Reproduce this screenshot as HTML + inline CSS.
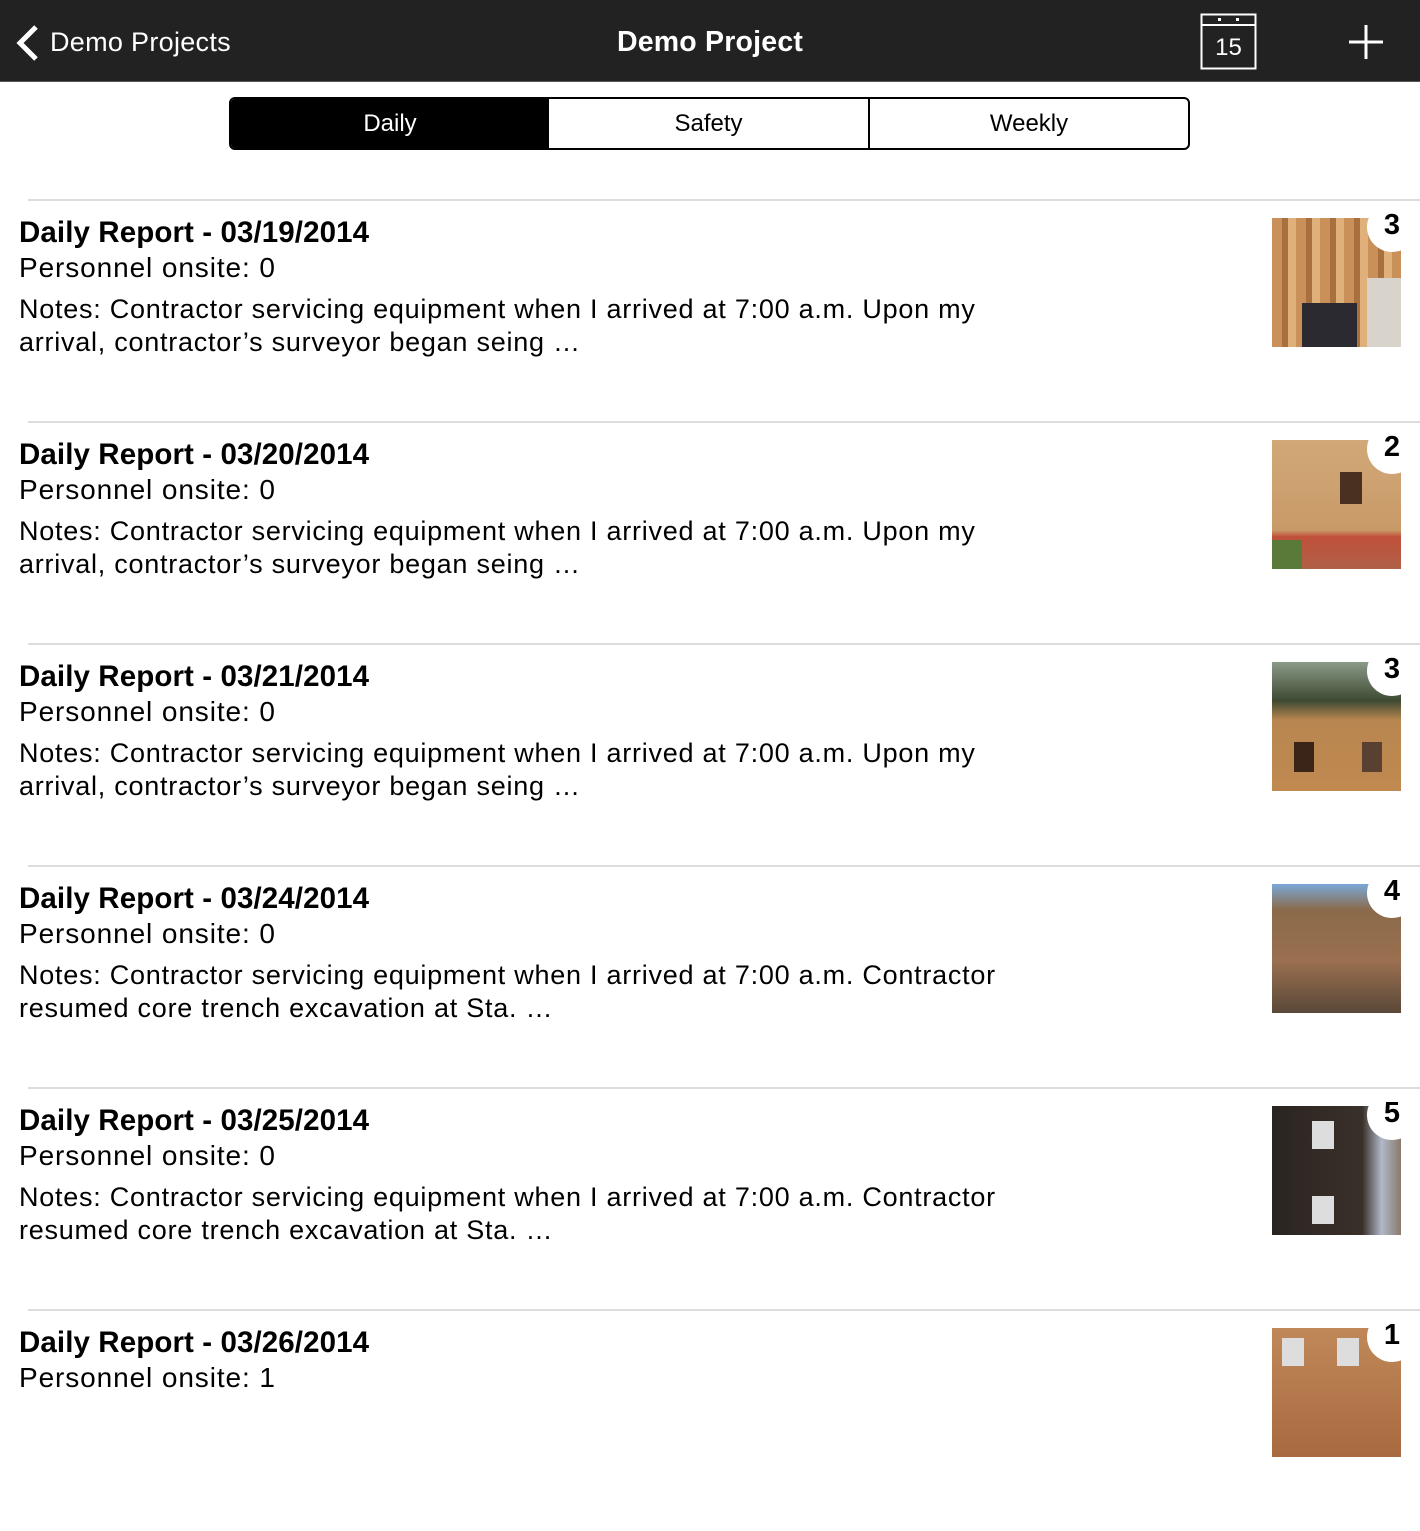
<!DOCTYPE html>
<html><head><meta charset="utf-8"><style>
*{margin:0;padding:0;box-sizing:border-box}
body{width:1420px;height:1400px;overflow:hidden;background:#fff;font-family:"Liberation Sans",Arial,sans-serif;color:#000;position:relative}
.hdr{position:absolute;left:0;top:0;width:1420px;height:82px;background:#222;color:#fff;border-bottom:1px solid #555}
.back{position:absolute;left:50px;top:27px;font-size:27px;letter-spacing:0.3px}
.title{position:absolute;left:0;width:1420px;text-align:center;top:26px;font-size:28.5px;font-weight:bold;letter-spacing:0.2px}
.seg{position:absolute;left:229px;top:97px;width:961px;height:53px;border:2px solid #000;border-radius:6px;display:flex;overflow:hidden}
.seg div{flex:none;text-align:center;line-height:49px;font-size:24px}
.row{position:absolute;left:0;width:1420px;height:222px}
.sep{position:absolute;left:28px;right:0;top:0;height:2px;background:#ddd}
.t{position:absolute;left:19px;top:17px;font-size:29.5px;font-weight:bold;letter-spacing:0.1px}
.p{position:absolute;left:19px;top:53px;font-size:28px;letter-spacing:0.9px}
.n{position:absolute;left:19px;top:94px;font-size:27px;line-height:33px;width:1050px;letter-spacing:0.75px}
.th{position:absolute;left:1272px;top:19px;width:129px;height:129px;overflow:hidden}
.b{position:absolute;left:1367px;top:3px;width:50px;height:50px;border-radius:50%;background:#fff;text-align:center;font-size:29px;font-weight:bold;line-height:50px}
.b span{position:relative;left:0px;top:-2px}
</style></head><body>
<div class="hdr">
<svg style="position:absolute;left:14px;top:24px" width="26" height="38" viewBox="0 0 26 38"><path d="M22 3 L6 19 L22 35" stroke="#fff" stroke-width="5" fill="none"/></svg>
<div class="back">Demo Projects</div>
<div class="title">Demo Project</div>
<svg style="position:absolute;left:1200px;top:13px" width="57" height="57" viewBox="0 0 57 57"><rect x="1.5" y="1.5" width="54" height="54" fill="none" stroke="#fff" stroke-width="2"/><line x1="1" y1="12" x2="56" y2="12" stroke="#fff" stroke-width="2"/><rect x="18" y="5" width="3" height="3" fill="#fff"/><rect x="36" y="5" width="3" height="3" fill="#fff"/><text x="28.5" y="42" fill="#fff" font-size="24" text-anchor="middle" font-family="Liberation Sans">15</text></svg>
<svg style="position:absolute;left:1349px;top:25px" width="34" height="34"><path d="M17 0V34M0 17H34" stroke="#fff" stroke-width="3"/></svg>
</div>
<div class="seg"><div style="width:318px;background:#000;color:#fff">Daily</div><div style="width:321px;border-right:2px solid #000">Safety</div><div style="width:318px">Weekly</div></div>

<div class="row" style="top:199px"><div class="sep"></div><div class="t">Daily Report - 03/19/2014</div><div class="p">Personnel onsite: 0</div><div class="n">Notes: Contractor servicing equipment when I arrived at 7:00 a.m. Upon my<br>arrival, contractor’s surveyor began seing …</div>
<div class="th" style="background:repeating-linear-gradient(90deg,#c9905a 0 10px,#a86f3f 10px 16px,#e0b07a 16px 24px)"><div style="position:absolute;left:30px;top:85px;width:55px;height:44px;background:#2a2a30"></div><div style="position:absolute;left:95px;top:60px;width:34px;height:69px;background:#d8d4cc"></div></div><div class="b"><span>3</span></div></div>

<div class="row" style="top:421px"><div class="sep"></div><div class="t">Daily Report - 03/20/2014</div><div class="p">Personnel onsite: 0</div><div class="n">Notes: Contractor servicing equipment when I arrived at 7:00 a.m. Upon my<br>arrival, contractor’s surveyor began seing …</div>
<div class="th" style="background:linear-gradient(#d2a878 0,#c89a68 70%,#c0503a 75%,#b06048 100%)"><div style="position:absolute;left:68px;top:32px;width:22px;height:32px;background:#4a3020"></div><div style="position:absolute;left:0;top:100px;width:30px;height:29px;background:#5a7a3a"></div></div><div class="b"><span>2</span></div></div>

<div class="row" style="top:643px"><div class="sep"></div><div class="t">Daily Report - 03/21/2014</div><div class="p">Personnel onsite: 0</div><div class="n">Notes: Contractor servicing equipment when I arrived at 7:00 a.m. Upon my<br>arrival, contractor’s surveyor began seing …</div>
<div class="th" style="background:linear-gradient(#8a9a88 0,#3e4a32 30%,#b88650 45%,#c08a50 100%)"><div style="position:absolute;left:22px;top:80px;width:20px;height:30px;background:#3a2518"></div><div style="position:absolute;left:90px;top:80px;width:20px;height:30px;background:#5a4030"></div></div><div class="b"><span>3</span></div></div>

<div class="row" style="top:865px"><div class="sep"></div><div class="t">Daily Report - 03/24/2014</div><div class="p">Personnel onsite: 0</div><div class="n">Notes: Contractor servicing equipment when I arrived at 7:00 a.m. Contractor<br>resumed core trench excavation at Sta. …</div>
<div class="th" style="background:linear-gradient(#7aa8d8 0,#8a6a4a 20%,#9a7050 60%,#5a4838 100%)"></div><div class="b"><span>4</span></div></div>

<div class="row" style="top:1087px"><div class="sep"></div><div class="t">Daily Report - 03/25/2014</div><div class="p">Personnel onsite: 0</div><div class="n">Notes: Contractor servicing equipment when I arrived at 7:00 a.m. Contractor<br>resumed core trench excavation at Sta. …</div>
<div class="th" style="background:linear-gradient(90deg,#2a2420 0,#3a302a 70%,#b0b8c8 85%,#8a7a6a 100%)"><div style="position:absolute;left:40px;top:15px;width:22px;height:28px;background:#ddd"></div><div style="position:absolute;left:40px;top:90px;width:22px;height:28px;background:#ddd"></div></div><div class="b"><span>5</span></div></div>

<div class="row" style="top:1309px"><div class="sep"></div><div class="t">Daily Report - 03/26/2014</div><div class="p">Personnel onsite: 1</div>
<div class="th" style="background:linear-gradient(#c08858,#a86a40)"><div style="position:absolute;left:10px;top:10px;width:22px;height:28px;background:#ddd"></div><div style="position:absolute;left:65px;top:10px;width:22px;height:28px;background:#ddd"></div></div><div class="b"><span>1</span></div></div>
</body></html>
